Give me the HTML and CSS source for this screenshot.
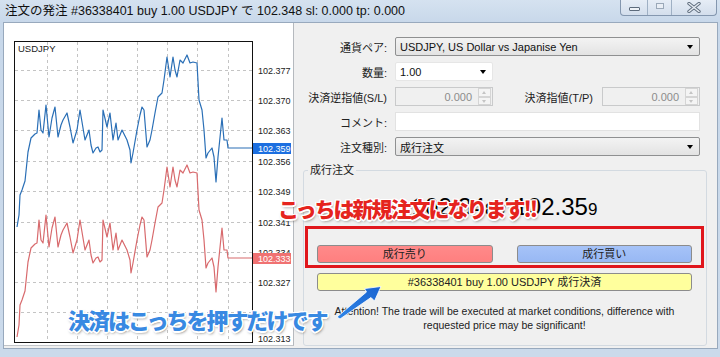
FILE: index.html
```html
<!DOCTYPE html>
<html lang="ja">
<head>
<meta charset="utf-8">
<title>注文の発注</title>
<link rel="stylesheet" href="styles.css">
</head>
<body>
<div class="window">
  <div class="titlebar">
    <div class="title">注文の発注 #36338401 buy 1.00 USDJPY で 102.348 sl: 0.000 tp: 0.000</div>
    <div class="controls">
      <span class="ctl min"><i></i></span>
      <span class="ctl max"><i></i></span>
      <span class="ctl close">
        <svg width="16" height="11" viewBox="0 0 16 11"><path d="M3 1.5 L13 9.5 M13 1.5 L3 9.5" stroke="#5f6d7e" stroke-width="3.4" stroke-linecap="round"/><path d="M3 1.5 L13 9.5 M13 1.5 L3 9.5" stroke="#e4eaf1" stroke-width="1.6" stroke-linecap="round"/></svg>
      </span>
    </div>
  </div>
  <div class="client">
    <div class="chartpanel">
      <svg class="chart" width="289" height="322" viewBox="4 23 289 322">
        <defs><clipPath id="plot"><rect x="15" y="42" width="237" height="300"/></clipPath></defs>
        <rect x="14.5" y="41.5" width="238" height="301" fill="#fff" stroke="#111" stroke-width="1"/>
        <g stroke="#c4c4c4" stroke-width="1" stroke-dasharray="3 3" fill="none">
          <path d="M15 70.5H252 M15 100.5H252 M15 130.5H252 M15 161.5H252 M15 191.5H252 M15 222.5H252 M15 252.5H252 M15 282.5H252 M15 312.5H252"/>
          <path d="M47.5 42V342 M77.5 42V342 M107.5 42V342 M137.5 42V342 M167.5 42V342 M197.5 42V342 M228.5 42V342"/>
        </g>
        <g clip-path="url(#plot)" fill="none" stroke-width="1.2" stroke-linejoin="round">
          <polyline transform="translate(0,110)" stroke="#d86a6d" points="17,227 19,215 20,195 22,190 25,181 28,152 31,138 35,134 37,133 39,110 41,130 43,133 46,105 49,137 52,118 55,107 58,137 61,125 63,120 67,113 70,127 73,143 77,130 80,110 83,128 85,140 89,130 91,145 93,153 96,148 98,147 100,152 102,150 103,110 107,127 110,113 113,140 116,123 118,140 122,130 127,140 130,150 131,163 133,153 137,130 140,115 142,107 144,110 147,147 150,140 152,130 155,113 158,97 162,93 164,80 167,57 170,77 173,57 175,70 177,77 180,60 183,63 187,55 190,63 193,62 197,63 199,100 202,110 204,130 206,158 208,153 212,148 214,157 216,182 218,157 222,118 224,140 227,140 228,148 252,148"/>
          <polyline stroke="#2a6fb6" points="17,227 19,215 20,195 22,190 25,181 28,152 31,138 35,134 37,133 39,110 41,130 43,133 46,105 49,137 52,118 55,107 58,137 61,125 63,120 67,113 70,127 73,143 77,130 80,110 83,128 85,140 89,130 91,145 93,153 96,148 98,147 100,152 102,150 103,110 107,127 110,113 113,140 116,123 118,140 122,130 127,140 130,150 131,163 133,153 137,130 140,115 142,107 144,110 147,147 150,140 152,130 155,113 158,97 162,93 164,80 167,57 170,77 173,57 175,70 177,77 180,60 183,63 187,55 190,63 193,62 197,63 199,100 202,110 204,130 206,158 208,153 212,148 214,157 216,182 218,157 222,118 224,140 227,140 228,148 252,148"/>
        </g>
        <text class="sym" x="18" y="52">USDJPY</text>
        <g class="axis">
          <text x="258" y="73.5">102.377</text>
          <text x="258" y="103.5">102.370</text>
          <text x="258" y="133.5">102.363</text>
          <text x="258" y="164.5">102.356</text>
          <text x="258" y="194.5">102.349</text>
          <text x="258" y="225.5">102.341</text>
          <text x="258" y="255.5">102.334</text>
          <text x="258" y="285.5">102.327</text>
          <text x="258" y="342">102.313</text>
        </g>
        <rect x="253" y="143" width="38" height="11" fill="#1c6fe0"/>
        <text class="hl" x="258" y="151.5">102.359</text>
        <rect x="253" y="253" width="38" height="11" fill="#f07272"/>
        <text class="hl" x="258" y="261.5">102.333</text>
      </svg>
    </div>
    <div class="formpanel">
      <div class="rows">
        <div class="row">
          <span class="lbl">通貨ペア:</span>
          <div class="combo gray wide"><span>USDJPY, US Dollar vs Japanise Yen</span><i class="arrow"></i></div>
        </div>
        <div class="row">
          <span class="lbl">数量:</span>
          <div class="combo white qty"><span>1.00</span><i class="arrow"></i></div>
        </div>
        <div class="row">
          <span class="lbl">決済逆指値(S/L)</span>
          <div class="spin"><span class="val">0.000</span><span class="spinbtns"><b class="up"></b><b class="down"></b></span></div>
          <span class="lbl2">決済指値(T/P)</span>
          <div class="spin"><span class="val">0.000</span><span class="spinbtns"><b class="up"></b><b class="down"></b></span></div>
        </div>
        <div class="row">
          <span class="lbl">コメント:</span>
          <div class="textbox wide"></div>
        </div>
        <div class="row">
          <span class="lbl">注文種別:</span>
          <div class="combo gray wide"><span>成行注文</span><i class="arrow"></i></div>
        </div>
      </div>
      <fieldset class="group">
        <legend>成行注文</legend>
        <div class="groupbody">
          <div class="price">102.34<small>8</small> / 102.35<small>9</small></div>
          <div class="btnrow">
            <button class="btn sell">成行売り</button>
            <button class="btn buy">成行買い</button>
          </div>
          <button class="btn closebtn">#36338401 buy 1.00 USDJPY 成行決済</button>
          <p class="attention">Attention! The trade will be executed at market conditions, difference with<br>requested price may be significant!</p>
        </div>
      </fieldset>
    </div>
  </div>
  <div class="redbox"></div>
  <div class="note red">こっちは新規注文になります!!</div>
  <div class="note blue">決済はこっちを押すだけです</div>
  <svg class="pointer" width="50" height="36" viewBox="335 284 50 36">
    <defs><linearGradient id="ag" x1="0" y1="1" x2="1" y2="0"><stop offset="0" stop-color="#2f86e8"/><stop offset="1" stop-color="#1a63d0"/></linearGradient></defs>
    <polygon points="337,317 366.5,292 364.5,288.6 381,286.5 374.5,301 371,297.5 340,319" fill="url(#ag)" stroke="#ffffff" stroke-width="0.8" stroke-linejoin="round"/>
  </svg>
</div>
</body>
</html>
```
FILE: styles.css
```css
* { box-sizing: border-box; }
html, body { margin: 0; padding: 0; }
body {
  font-family: "Liberation Sans", "Noto Sans CJK JP", sans-serif;
  background: #fff;
}
.window {
  position: relative;
  width: 720px;
  height: 357px;
  overflow: hidden;
  background: linear-gradient(#d5e2f0, #c8d8ea 22px, #cbdaeb);
}
.titlebar {
  height: 22px;
  display: flex;
  justify-content: space-between;
  align-items: flex-start;
}
.title {
  padding-left: 5px;
  line-height: 22px;
  font-size: 12.5px;
  color: #111;
  white-space: nowrap;
}
.controls {
  display: flex;
  height: 16px;
  margin-right: 3px;
  border: 1px solid #8497af;
  border-top: none;
  border-radius: 0 0 4px 4px;
  background: linear-gradient(#e6edf6, #d3deec);
  overflow: hidden;
}
.ctl {
  display: flex;
  justify-content: center;
  align-items: center;
  height: 15px;
}
.ctl + .ctl { border-left: 1px solid #9fb0c4; }
.min { width: 26px; align-items: flex-end; padding-bottom: 4px; }
.min i {
  display: block;
  width: 11px;
  height: 4px;
  border: 1px solid #5d6b7c;
  border-radius: 1px;
  background: #eef2f7;
}
.max { width: 24px; align-items: flex-start; padding-top: 3px; }
.max i {
  display: block;
  width: 8px;
  height: 6px;
  border: 1px solid #9aa8b8;
  background: #e9eef5;
}
.close { width: 45px; }
.close svg { display: block; }

.client {
  display: flex;
  height: 327px;
  margin: 0 2px 0 3px;
  border: 1px solid #98a9bd;
  background: #f0f0f0;
}
.chartpanel {
  width: 290px;
  height: 323px;
  background: #fff;
  border-right: 1px solid #b5b9be;
  border-bottom: 1px solid #c2c5c9;
}
.chart { display: block; }
.chart text { font-family: "Liberation Sans", sans-serif; }
.chart .sym { font-size: 9.5px; fill: #222; }
.chart .axis text { font-size: 9px; fill: #222; }
.chart .hl { font-size: 9px; fill: #fff; }

.formpanel {
  flex: 1;
  display: flex;
  flex-direction: column;
}
.rows {
  display: flex;
  flex-direction: column;
  gap: 6px;
  padding-top: 14px;
}
.row {
  display: flex;
  align-items: center;
  height: 19px;
}
.lbl, .lbl2 {
  font-size: 11px;
  color: #222;
  text-align: right;
  white-space: nowrap;
}
.lbl { width: 93px; margin-right: 8px; }
.lbl2 { width: 100px; margin-right: 9px; }
.combo {
  position: relative;
  height: 19px;
  display: flex;
  align-items: center;
  padding-left: 4px;
  font-size: 11px;
  color: #111;
  border: 1px solid #8f9091;
  border-radius: 2px;
}
.combo.gray { background: linear-gradient(#f3f3f3, #e3e3e3); }
.combo.white { background: #fff; border-color: #e6e6e6; }
.wide { width: 305px; }
.qty { width: 98px; }
.arrow {
  position: absolute;
  right: 6px;
  top: 7px;
  width: 0;
  height: 0;
  border-left: 3.5px solid transparent;
  border-right: 3.5px solid transparent;
  border-top: 4px solid #000;
}
.spin {
  width: 98px;
  height: 19px;
  display: flex;
  align-items: center;
  justify-content: flex-end;
  border: 1px solid #c9cacb;
  background: #f0f0f0;
  font-size: 11px;
  color: #8c8c8c;
}
.spin .val { padding-right: 6px; }
.spinbtns {
  display: flex;
  flex-direction: column;
  width: 13px;
  height: 17px;
  margin-right: 1px;
}
.spinbtns b {
  position: relative;
  flex: 1;
  border: 1px solid #d5d5d5;
  background: #f4f4f4;
}
.spinbtns b::after {
  content: "";
  position: absolute;
  left: 3px;
  width: 0;
  height: 0;
  border-left: 2.5px solid transparent;
  border-right: 2.5px solid transparent;
}
.spinbtns .up::after { top: 2px; border-bottom: 3px solid #c4c4c4; }
.spinbtns .down::after { top: 2px; border-top: 3px solid #c4c4c4; }
.textbox {
  height: 19px;
  background: #fff;
  border: 1px solid #e2e2e2;
}

.group {
  height: 183px;
  margin: 7px 10px 0 9px;
  padding: 0;
  border: 1px solid #d3dae1;
  border-radius: 3px;
  min-inline-size: 0;
}
.group legend {
  margin-left: 4px;
  padding: 0 2px;
  font-size: 11px;
  line-height: 14px;
  color: #222;
}
.groupbody { padding: 0 14px 0 13px; }
.price {
  margin-top: 16px;
  text-align: center;
  font-size: 24px;
  line-height: 28px;
  color: #000;
  white-space: nowrap;
}
.price small { font-size: 17px; }
.btnrow {
  display: flex;
  gap: 24px;
  margin-top: 21px;
}
.btn {
  display: block;
  height: 18px;
  padding: 0;
  border: 1px solid #8c8c8c;
  border-radius: 3px;
  font-family: "Liberation Sans", "Noto Sans CJK JP", sans-serif;
  font-size: 11px;
  line-height: 16px;
  color: #222;
}
.btnrow .btn { flex: 1; }
.sell { background: linear-gradient(#ff8a8a, #ff7f7f); }
.buy { background: linear-gradient(#a6c3f8, #98b8f4); }
.closebtn {
  width: 100%;
  margin-top: 10px;
  background: #ffff9d;
}
.attention {
  margin: 13px 0 0;
  text-align: center;
  font-size: 10.5px;
  line-height: 14px;
  color: #222;
}

.redbox {
  position: absolute;
  left: 305px;
  top: 226px;
  width: 399px;
  height: 42px;
  border: 3px solid #e0161c;
}
.note {
  position: absolute;
  font-family: "Noto Sans CJK JP", sans-serif;
  font-weight: 900;
  line-height: 1;
  white-space: nowrap;
  letter-spacing: -2px;
  text-shadow:
    1.5px 0 0 #fff, -1.5px 0 0 #fff, 0 1.5px 0 #fff, 0 -1.5px 0 #fff,
    1.2px 1.2px 0 #fff, -1.2px 1.2px 0 #fff, 1.2px -1.2px 0 #fff, -1.2px -1.2px 0 #fff,
    1px 2px 3px rgba(0, 0, 0, 0.55);
}
.note.red { left: 278px; top: 198px; font-size: 21px; color: #e5241e; }
.note.blue { left: 68px; top: 308px; font-size: 22px; color: #3889e2; }
.pointer {
  position: absolute;
  left: 335px;
  top: 284px;
}
```
